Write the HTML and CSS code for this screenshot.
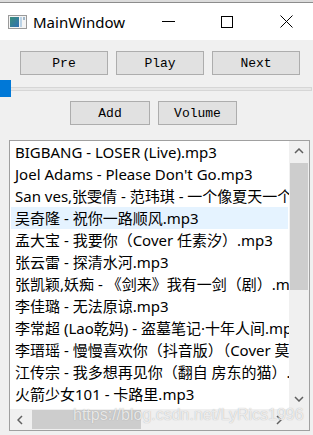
FILE: index.html
```html
<!DOCTYPE html>
<html lang="en">
<head>
    <meta charset="UTF-8">
    <title>MainWindow</title>
    <link rel="stylesheet" href="styles.css">
</head>
<body>
    <div class="top-strip"></div>

    <div class="titlebar">
        <svg class="app-icon" width="19" height="14" viewBox="0 0 19 14">
            <defs>
                <linearGradient id="ic" x1="0" y1="0" x2="1" y2="1">
                    <stop offset="0" stop-color="#3a8f7a"/>
                    <stop offset="1" stop-color="#2f6fb3"/>
                </linearGradient>
            </defs>
            <rect x="0.5" y="0.5" width="18" height="13" fill="#f4f4f4" stroke="#9a9a9a"/>
            <rect x="2" y="2" width="9" height="10" fill="url(#ic)"/>
            <rect x="12" y="2" width="2" height="10" fill="#bcd3e6"/>
            <rect x="15" y="2" width="2" height="3" fill="#9fb6c8"/>
        </svg>
        <span class="title">MainWindow</span>
        <div class="win-controls">
            <svg class="ctl-min" width="13" height="13" viewBox="0 0 13 13">
                <line x1="0" y1="6.5" x2="13" y2="6.5" stroke="#000" stroke-width="1"/>
            </svg>
            <svg class="ctl-max" width="12" height="12" viewBox="0 0 12 12">
                <rect x="0.5" y="0.5" width="11" height="11" fill="none" stroke="#000" stroke-width="1"/>
            </svg>
            <svg class="ctl-close" width="13" height="13" viewBox="0 0 13 13">
                <path d="M0.5 0.5 L12.5 12.5 M12.5 0.5 L0.5 12.5" stroke="#000" stroke-width="1"/>
            </svg>
        </div>
    </div>

    <div class="content">
        <div class="btn-row btn-row-top">
            <button class="qbtn">Pre</button>
            <button class="qbtn">Play</button>
            <button class="qbtn">Next</button>
        </div>

        <div class="slider">
            <div class="slider-groove"></div>
            <div class="slider-handle"></div>
        </div>

        <div class="btn-row btn-row-bottom">
            <button class="qbtn btn-add">Add</button>
            <button class="qbtn btn-volume">Volume</button>
        </div>

        <div class="list-box">
            <div class="list-view">
                <div class="list-item">BIGBANG - LOSER (Live).mp3</div>
                <div class="list-item">Joel Adams - Please Don't Go.mp3</div>
                <div class="list-item">San ves,张雯倩 - 范玮琪 - 一个像夏天一个像秋天.mp3</div>
                <div class="list-item selected">吴奇隆 - 祝你一路顺风.mp3</div>
                <div class="list-item">孟大宝 - 我要你（Cover 任素汐）.mp3</div>
                <div class="list-item">张云雷 - 探清水河.mp3</div>
                <div class="list-item">张凯颖,妖痴 - 《剑来》我有一剑（剧）.mp3</div>
                <div class="list-item">李佳璐 - 无法原谅.mp3</div>
                <div class="list-item">李常超 (Lao乾妈) - 盗墓笔记·十年人间.mp3</div>
                <div class="list-item">李瑨瑶 - 慢慢喜欢你（抖音版）（Cover 莫文蔚）.mp3</div>
                <div class="list-item">江传宗 - 我多想再见你（翻自 房东的猫）.mp3</div>
                <div class="list-item">火箭少女101 - 卡路里.mp3</div>
            </div>

            <div class="vscroll">
                <div class="sb-arrow">
                    <svg width="10" height="6" viewBox="0 0 10 6"><path d="M1 5 L5 1 L9 5" fill="none" stroke="#606060" stroke-width="1.5"/></svg>
                </div>
                <div class="vscroll-thumb"></div>
                <div class="sb-track"></div>
                <div class="sb-arrow">
                    <svg width="10" height="6" viewBox="0 0 10 6"><path d="M1 1 L5 5 L9 1" fill="none" stroke="#606060" stroke-width="1.5"/></svg>
                </div>
            </div>

            <div class="hscroll">
                <div class="sb-arrow">
                    <svg width="6" height="10" viewBox="0 0 6 10"><path d="M5 1 L1 5 L5 9" fill="none" stroke="#606060" stroke-width="1.5"/></svg>
                </div>
                <div class="hscroll-thumb"></div>
                <div class="sb-track"></div>
                <div class="sb-arrow">
                    <svg width="6" height="10" viewBox="0 0 6 10"><path d="M1 1 L5 5 L1 9" fill="none" stroke="#606060" stroke-width="1.5"/></svg>
                </div>
            </div>

            <div class="sb-corner"></div>

            <div class="watermark">https://blog.csdn.net/LyRics1996</div>
        </div>
    </div>
</body>
</html>
```

FILE: styles.css
```css
body {
    margin: 0;
    padding: 0;
    width: 313px;
    height: 435px;
    overflow: hidden;
    background-color: #f0f0f0;
    font-family: "Noto Sans", "Noto Sans CJK SC", sans-serif;
}

.top-strip {
    height: 2px;
    background-color: #dcdcdc;
    border-bottom: 1px solid #8c8c8c;
}

.titlebar {
    height: 37px;
    background-color: white;
    display: flex;
    align-items: center;
}

.app-icon {
    margin-left: 8px;
    flex-shrink: 0;
}

.title {
    margin-left: 6px;
    font-size: 15px;
    color: #000;
}

.win-controls {
    margin-left: auto;
    display: flex;
    align-items: center;
}

.ctl-min {
    margin-right: 46px;
}

.ctl-max {
    margin-right: 47px;
}

.ctl-close {
    margin-right: 20px;
}

.content {
    display: flex;
    flex-direction: column;
}

.btn-row {
    display: flex;
    gap: 8px;
}

.btn-row-top {
    padding: 11px 0 0 20px;
}

.btn-row-bottom {
    padding: 4px 0 0 70px;
}

.qbtn {
    width: 88px;
    height: 24px;
    margin: 0;
    padding: 0;
    background-color: #e1e1e1;
    border: 1px solid #adadad;
    font-family: "Liberation Mono", "DejaVu Sans Mono", monospace;
    font-size: 13px;
    color: #000;
}

.btn-add {
    width: 80px;
}

.btn-volume {
    width: 79px;
}

.slider {
    position: relative;
    height: 17px;
    margin-top: 5px;
    display: flex;
    align-items: center;
}

.slider-groove {
    width: 310px;
    height: 2px;
    background-color: #e7e7e7;
    border: 1px solid #d6d6d6;
}

.slider-handle {
    position: absolute;
    left: 0;
    top: 0;
    width: 11px;
    height: 17px;
    background-color: #0078d7;
}

.list-box {
    position: relative;
    margin: 15px 0 0 9px;
    width: 299px;
    height: 289px;
    border: 1px solid #a0a0a0;
    background-color: white;
    display: grid;
    grid-template-columns: 279px 20px;
    grid-template-rows: 268px 21px;
}

.list-view {
    overflow: hidden;
    padding: 0 1px;
}

.list-item {
    height: 22px;
    line-height: 22px;
    padding-left: 4px;
    white-space: nowrap;
    font-size: 15px;
    color: #000;
}

.list-item.selected {
    background-color: #e5f3ff;
}

.vscroll {
    background-color: #f0f0f0;
    display: flex;
    flex-direction: column;
}

.hscroll {
    background-color: #f0f0f0;
    display: flex;
    align-items: stretch;
}

.sb-arrow {
    flex: 0 0 20px;
    display: flex;
    align-items: center;
    justify-content: center;
}

.vscroll .sb-arrow {
    height: 20px;
}

.vscroll-thumb {
    margin: 2px 1px 0 1px;
    height: 127px;
    background-color: #cdcdcd;
}

.hscroll-thumb {
    margin: 1px 0 1px 2px;
    width: 109px;
    background-color: #cdcdcd;
}

.sb-track {
    flex: 1;
}

.sb-corner {
    background-color: #f0f0f0;
}

.watermark {
    position: absolute;
    left: 63px;
    top: 265px;
    font-family: "Liberation Sans", Arial, sans-serif;
    font-size: 16px;
    color: rgba(255, 255, 255, 0.75);
    text-shadow: 0 0 1px rgba(120, 120, 120, 0.6);
    white-space: nowrap;
}
```
